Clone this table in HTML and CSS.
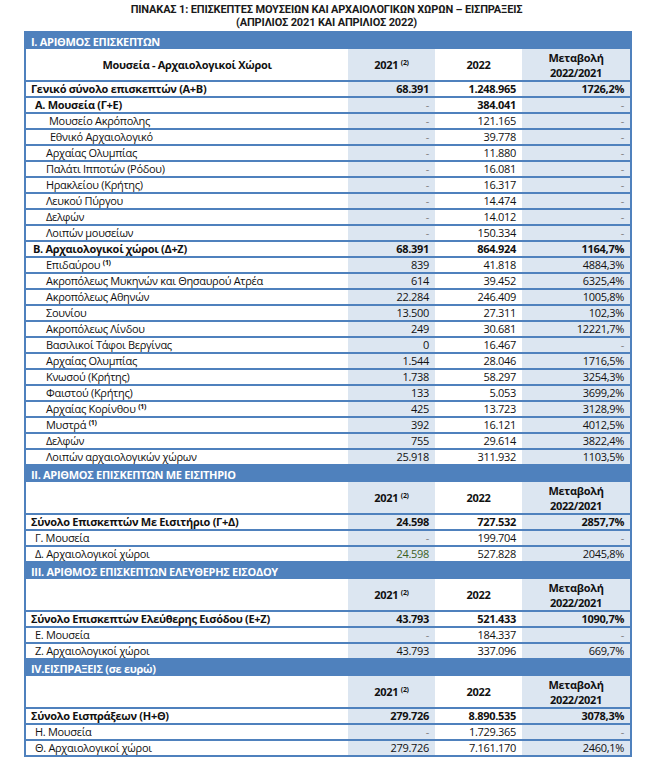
FILE: index.html
```html
<!DOCTYPE html>
<html lang="el">
<head>
<meta charset="utf-8">
<title>Πίνακας 1</title>
<link rel="stylesheet" href="styles.css">
</head>
<body>
<div class="page">
  <h1 class="title"><span class="tl">ΠΙΝΑΚΑΣ 1: ΕΠΙΣΚΕΠΤΕΣ ΜΟΥΣΕΙΩΝ ΚΑΙ ΑΡΧΑΙΟΛΟΓΙΚΩΝ ΧΩΡΩΝ – ΕΙΣΠΡΑΞΕΙΣ</span><span class="tl">(ΑΠΡΙΛΙΟΣ 2021 ΚΑΙ ΑΠΡΙΛΙΟΣ 2022)</span></h1>
  <table class="tbl">
    <colgroup><col class="c1"><col class="c2"><col class="c3"><col class="c4"></colgroup>
    <tr class="sec"><td colspan="4">I. ΑΡΙΘΜΟΣ ΕΠΙΣΚΕΠΤΩΝ</td></tr>
    <tr class="hd"><th>Μουσεία - Αρχαιολογικοί Χώροι</th><th class="sh">2021 <sup>(2)</sup></th><th>2022</th><th class="sh">Μεταβολή<br>2022/2021</th></tr>
    <tr class="tot"><td class="l0">Γενικό σύνολο επισκεπτών (Α+Β)</td><td class="sh">68.391</td><td>1.248.965</td><td class="sh">1726,2%</td></tr>
    <tr class="tot"><td class="l1">Α. Μουσεία (Γ+Ε)</td><td class="sh dash">-</td><td>384.041</td><td class="sh dash">-</td></tr>
    <tr><td class="l3">Μουσείο Ακρόπολης</td><td class="sh dash">-</td><td>121.165</td><td class="sh dash">-</td></tr>
    <tr><td class="l4">Εθνικό Αρχαιολογικό</td><td class="sh dash">-</td><td>39.778</td><td class="sh dash">-</td></tr>
    <tr><td class="l2">Αρχαίας Ολυμπίας</td><td class="sh dash">-</td><td>11.880</td><td class="sh dash">-</td></tr>
    <tr><td class="l2">Παλάτι Ιπποτών (Ρόδου)</td><td class="sh dash">-</td><td>16.081</td><td class="sh dash">-</td></tr>
    <tr><td class="l2">Ηρακλείου (Κρήτης)</td><td class="sh dash">-</td><td>16.317</td><td class="sh dash">-</td></tr>
    <tr><td class="l2">Λευκού Πύργου</td><td class="sh dash">-</td><td>14.474</td><td class="sh dash">-</td></tr>
    <tr><td class="l2">Δελφών</td><td class="sh dash">-</td><td>14.012</td><td class="sh dash">-</td></tr>
    <tr><td class="l2">Λοιπών μουσείων</td><td class="sh dash">-</td><td>150.334</td><td class="sh dash">-</td></tr>
    <tr class="tot"><td class="l1b">Β. Αρχαιολογικοί χώροι (Δ+Ζ)</td><td class="sh">68.391</td><td>864.924</td><td class="sh">1164,7%</td></tr>
    <tr><td class="l2">Επιδαύρου <sup>(1)</sup></td><td class="sh">839</td><td>41.818</td><td class="sh">4884,3%</td></tr>
    <tr><td class="l2">Ακροπόλεως Μυκηνών και Θησαυρού Ατρέα</td><td class="sh">614</td><td>39.452</td><td class="sh">6325,4%</td></tr>
    <tr><td class="l2">Ακροπόλεως Αθηνών</td><td class="sh">22.284</td><td>246.409</td><td class="sh">1005,8%</td></tr>
    <tr><td class="l2">Σουνίου</td><td class="sh">13.500</td><td>27.311</td><td class="sh">102,3%</td></tr>
    <tr><td class="l2">Ακροπόλεως Λίνδου</td><td class="sh">249</td><td>30.681</td><td class="sh">12221,7%</td></tr>
    <tr><td class="l2">Βασιλικοί Τάφοι Βεργίνας</td><td class="sh">0</td><td>16.467</td><td class="sh dash">-</td></tr>
    <tr><td class="l2">Αρχαίας Ολυμπίας</td><td class="sh">1.544</td><td>28.046</td><td class="sh">1716,5%</td></tr>
    <tr><td class="l2">Κνωσού (Κρήτης)</td><td class="sh">1.738</td><td>58.297</td><td class="sh">3254,3%</td></tr>
    <tr><td class="l2">Φαιστού (Κρήτης)</td><td class="sh">133</td><td>5.053</td><td class="sh">3699,2%</td></tr>
    <tr><td class="l2">Αρχαίας Κορίνθου <sup>(1)</sup></td><td class="sh">425</td><td>13.723</td><td class="sh">3128,9%</td></tr>
    <tr><td class="l2">Μυστρά <sup>(1)</sup></td><td class="sh">392</td><td>16.121</td><td class="sh">4012,5%</td></tr>
    <tr><td class="l2">Δελφών</td><td class="sh">755</td><td>29.614</td><td class="sh">3822,4%</td></tr>
    <tr><td class="l2">Λοιπών αρχαιολογικών χώρων</td><td class="sh">25.918</td><td>311.932</td><td class="sh">1103,5%</td></tr>

    <tr class="sec"><td colspan="4">II. ΑΡΙΘΜΟΣ ΕΠΙΣΚΕΠΤΩΝ ΜΕ ΕΙΣΙΤΗΡΙΟ</td></tr>
    <tr class="hd"><th></th><th class="sh">2021 <sup>(2)</sup></th><th>2022</th><th class="sh">Μεταβολή<br>2022/2021</th></tr>
    <tr class="tot"><td class="l0">Σύνολο Επισκεπτών Με Εισιτήριο (Γ+Δ)</td><td class="sh">24.598</td><td>727.532</td><td class="sh">2857,7%</td></tr>
    <tr><td class="l1">Γ. Μουσεία</td><td class="sh dash">-</td><td>199.704</td><td class="sh dash">-</td></tr>
    <tr><td class="l1">Δ. Αρχαιολογικοί χώροι</td><td class="sh green">24.598</td><td>527.828</td><td class="sh">2045,8%</td></tr>

    <tr class="sec"><td colspan="4">III. ΑΡΙΘΜΟΣ ΕΠΙΣΚΕΠΤΩΝ ΕΛΕΥΘΕΡΗΣ ΕΙΣΟΔΟΥ</td></tr>
    <tr class="hd"><th></th><th class="sh">2021 <sup>(2)</sup></th><th>2022</th><th class="sh">Μεταβολή<br>2022/2021</th></tr>
    <tr class="tot"><td class="l0">Σύνολο Επισκεπτών Ελεύθερης Εισόδου (Ε+Ζ)</td><td class="sh">43.793</td><td>521.433</td><td class="sh">1090,7%</td></tr>
    <tr><td class="l1">Ε. Μουσεία</td><td class="sh dash">-</td><td>184.337</td><td class="sh dash">-</td></tr>
    <tr><td class="l1">Ζ. Αρχαιολογικοί χώροι</td><td class="sh">43.793</td><td>337.096</td><td class="sh">669,7%</td></tr>

    <tr class="sec"><td colspan="4">IV.ΕΙΣΠΡΑΞΕΙΣ (σε ευρώ)</td></tr>
    <tr class="hd"><th></th><th class="sh">2021 <sup>(2)</sup></th><th>2022</th><th class="sh">Μεταβολή<br>2022/2021</th></tr>
    <tr class="tot"><td class="l0">Σύνολο Εισπράξεων (Η+Θ)</td><td class="sh">279.726</td><td>8.890.535</td><td class="sh">3078,3%</td></tr>
    <tr><td class="l1">Η. Μουσεία</td><td class="sh dash">-</td><td>1.729.365</td><td class="sh dash">-</td></tr>
    <tr><td class="l1">Θ. Αρχαιολογικοί χώροι</td><td class="sh">279.726</td><td>7.161.170</td><td class="sh">2460,1%</td></tr>
  </table>
</div>
</body>
</html>
```

FILE: styles.css
```css
html, body {
  margin: 0;
  padding: 0;
  background: #ffffff;
}
body {
  font-family: "Open Sans", "Noto Sans", sans-serif;
  color: #111111;
}
.page {
  width: 653px;
  padding-top: 3px;
}
.title {
  margin: 0;
  text-align: center;
  font-family: Roboto, "Noto Sans", sans-serif;
  font-size: 11px;
  font-weight: 700;
  letter-spacing: -0.15px;
  color: #1a1a1a;
}
.tl {
  display: block;
  height: 13px;
  line-height: 13px;
}
.tbl {
  margin: 2px 0 0 24px;
  width: 606px;
  border-collapse: collapse;
  table-layout: fixed;
  border: 2px solid #4f81bd;
  font-size: 11px;
  letter-spacing: -0.3px;
}
.c1 { width: 323px; }
.c2 { width: 87px; }
.c3 { width: 87px; }
.c4 { width: 109px; }
.tbl td, .tbl th {
  border: none;
  border-bottom: 2px solid #4f81bd;
  padding: 0 6px;
  height: 14px;
  line-height: 14px;
  text-align: right;
  white-space: nowrap;
  overflow: hidden;
}
.tbl .sh { background: #dce6f1; }
.tbl .sec td {
  background: #4f81bd;
  color: #ffffff;
  font-weight: 700;
  text-align: left;
  padding: 2px 0 0 5px;
  height: 13px;
  line-height: 13px;
  border-bottom: 1px solid #4f81bd;
}
.tbl .hd th {
  height: 31px;
  line-height: 15px;
  text-align: center;
  font-weight: 700;
  background: #ffffff;
}
.tbl .hd th.sh { background: #dce6f1; }
.tot td { font-weight: 700; }
.tbl td.l0 { text-align: left; padding-left: 5px; }
.tbl td.l1 { text-align: left; padding-left: 9px; }
.tbl td.l1b { text-align: left; padding-left: 7px; }
.tbl td.l2 { text-align: left; padding-left: 20px; }
.tbl td.l3 { text-align: left; padding-left: 23px; }
.tbl td.l4 { text-align: left; padding-left: 24px; }
sup {
  font-size: 7px;
  line-height: 0;
  vertical-align: 4px;
  font-weight: 700;
}
.tbl td.dash { color: #7f7f7f; font-weight: 400; }
.tbl td.green { color: #3b5e1f; }
```
